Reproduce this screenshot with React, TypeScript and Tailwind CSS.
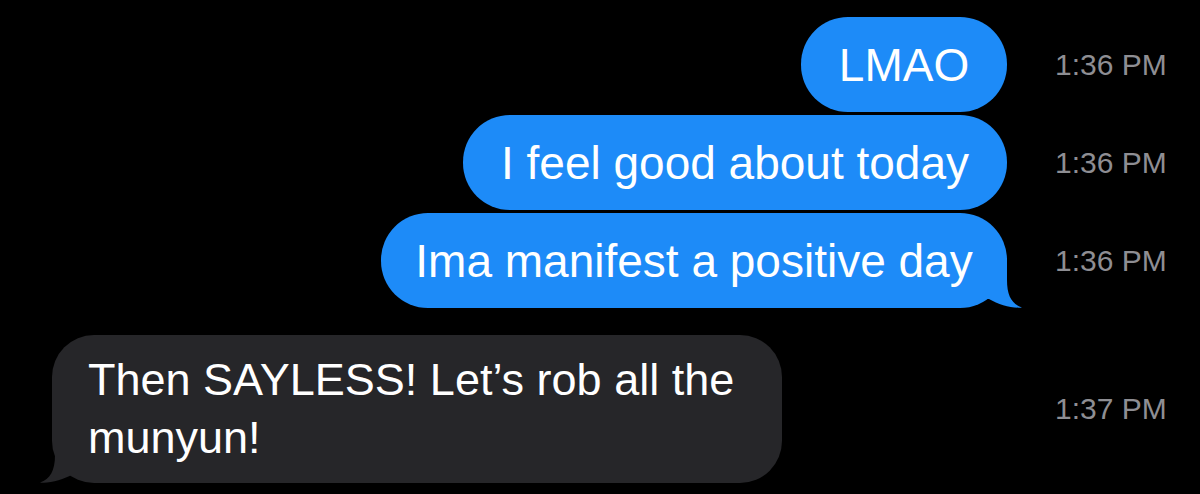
type Message = {
  id: number;
  text: string;
  time: string;
  width: number;
  tail?: boolean;
};

const outgoing: Message[] = [
  { id: 1, text: "LMAO", time: "1:36 PM", width: 206 },
  { id: 2, text: "I feel good about today", time: "1:36 PM", width: 544 },
  { id: 3, text: "Ima manifest a positive day", time: "1:36 PM", width: 626, tail: true },
];

function Tail({ color, className }: { color: string; className: string }) {
  return (
    <svg
      width="37"
      height="50"
      viewBox="0 0 37 50"
      className={className}
      aria-hidden="true"
    >
      <path
        d="M22 0 L22 22 C22 38 27 46 37 49.5 C27 50.5 14 47 4 41 L0 41 L0 0 Z"
        fill={color}
      />
    </svg>
  );
}

function Timestamp({ time }: { time: string }) {
  return (
    <div className="w-[145px] shrink-0 text-[30px] leading-none text-[#8e8e93] [font-family:'Liberation_Sans',Arial,sans-serif]">
      {time}
    </div>
  );
}

function OutgoingRow({ message, first }: { message: Message; first: boolean }) {
  return (
    <div className={`flex items-center ${first ? "" : "mt-[3px]"}`}>
      <div className="flex flex-1 justify-end pr-[48px]">
        <div
          className="relative flex h-[95px] items-center justify-center rounded-[47px] bg-[#1d8bf8] text-[46px] text-white [font-family:'Liberation_Sans',Arial,sans-serif]"
          style={{ width: message.width }}
        >
          <span className="relative z-10 leading-none">{message.text}</span>
          {message.tail && (
            <Tail color="#1d8bf8" className="absolute bottom-0 right-[-15px]" />
          )}
        </div>
      </div>
      <Timestamp time={message.time} />
    </div>
  );
}

export default function App() {
  return (
    <div className="h-[494px] w-[1200px] overflow-hidden bg-black pt-[17px]">
      {outgoing.map((message, i) => (
        <OutgoingRow key={message.id} message={message} first={i === 0} />
      ))}

      <div className="mt-[27px] flex items-center">
        <div className="flex-1 pl-[52px]">
          <div className="relative h-[148px] w-[730px] rounded-[42px] bg-[#262629] px-[36px] py-[16px] text-[45px] leading-[58px] text-white [font-family:'Liberation_Sans',Arial,sans-serif]">
            <p className="relative z-10">
              Then SAYLESS! Let’s rob all the
              <br />
              munyun!
            </p>
            <Tail
              color="#262629"
              className="absolute bottom-0 left-[-12px] -scale-x-100"
            />
          </div>
        </div>
        <Timestamp time="1:37 PM" />
      </div>
    </div>
  );
}
